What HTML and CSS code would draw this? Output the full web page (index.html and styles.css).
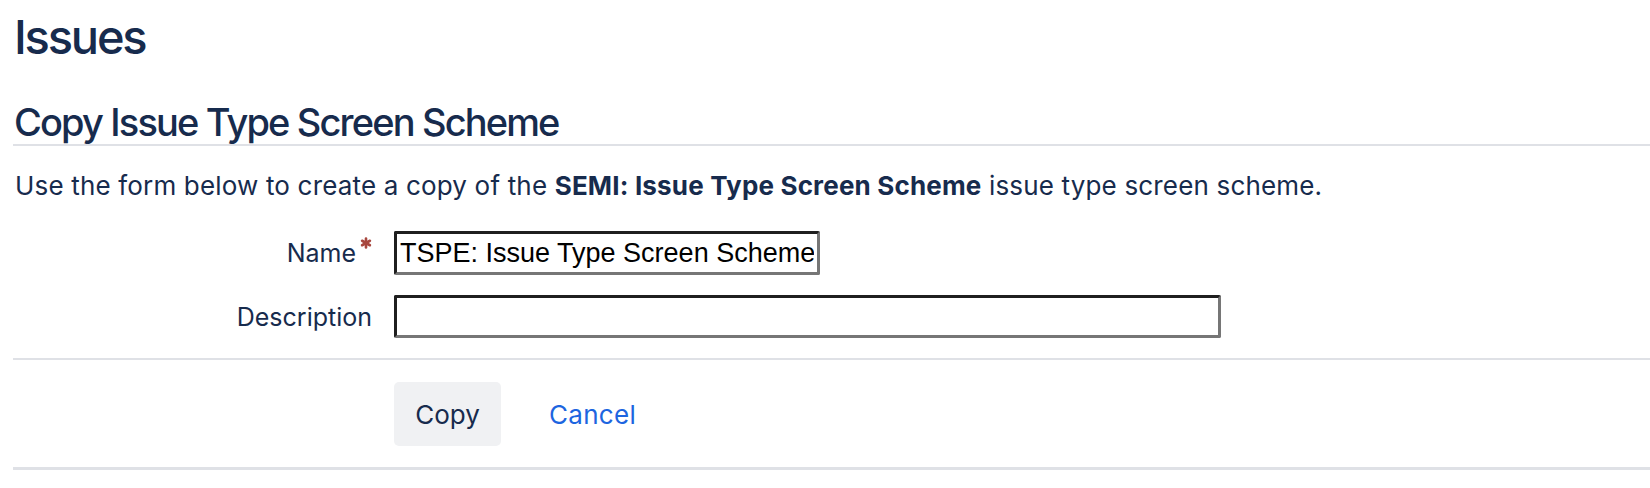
FILE: index.html
```html
<!DOCTYPE html>
<html lang="en">
<head>
<meta charset="utf-8">
<title>Copy Issue Type Screen Scheme</title>
<link rel="stylesheet" href="styles.css">
</head>
<body>
<div class="page">
  <h1 class="page-title">Issues</h1>
  <h2 class="section-title">Copy Issue Type Screen Scheme</h2>
  <p class="intro">Use the form below to create a copy of the <strong>SEMI: Issue Type Screen Scheme</strong> issue type screen scheme.</p>
  <form class="copy-form">
    <div class="fields">
      <div class="field">
        <label class="field-label" for="name">Name<svg class="req" viewBox="0 0 12 12" width="12" height="12" aria-hidden="true"><g stroke="currentColor" stroke-width="2.6" stroke-linecap="round"><line x1="6" y1="1.5" x2="6" y2="10.5"/><line x1="2.1" y1="3.75" x2="9.9" y2="8.25"/><line x1="2.1" y1="8.25" x2="9.9" y2="3.75"/></g></svg></label>
        <input class="text-input name-input" id="name" type="text" value="TSPE: Issue Type Screen Scheme">
      </div>
      <div class="field">
        <label class="field-label" for="desc">Description</label>
        <input class="text-input desc-input" id="desc" type="text" value="">
      </div>
    </div>
    <div class="buttons">
      <button class="btn" type="button">Copy</button>
      <a class="cancel" href="#">Cancel</a>
    </div>
  </form>
</div>
</body>
</html>
```

FILE: styles.css
```css
html, body {
  margin: 0;
  padding: 0;
  background: #ffffff;
}

body {
  font-family: Inter, "Noto Sans", sans-serif;
  color: #172b4d;
}

.page {
  padding-left: 13px;
}

.page-title {
  margin: 9px 0 0;
  padding-left: 1px;
  font-size: 47px;
  line-height: 56px;
  font-weight: 500;
  letter-spacing: -2.2px;
}

.section-title {
  margin: 35px 0 0;
  padding-left: 1px;
  font-size: 38px;
  line-height: 44px;
  font-weight: 500;
  letter-spacing: -1.85px;
  border-bottom: 2px solid #dfe1e6;
}

.intro {
  margin: 24px 0 0;
  padding-left: 2px;
  font-size: 26px;
  line-height: 32px;
  letter-spacing: 0.17px;
}

.intro strong {
  font-weight: 700;
}

.copy-form {
  margin: 0;
}

.fields {
  display: flex;
  flex-direction: column;
  gap: 20px;
  padding: 29px 0 20px;
  border-bottom: 2px solid #dfe1e6;
}

.field {
  display: flex;
  align-items: center;
  gap: 22px;
}

.field-label {
  width: 359px;
  text-align: right;
  font-size: 25px;
  line-height: 30px;
  display: flex;
  justify-content: flex-end;
  align-items: flex-start;
}

.req {
  color: #a8483f;
  margin-left: 4px;
  margin-top: -1px;
}

.text-input {
  box-sizing: border-box;
  margin: 0;
  padding: 0 3px;
  font-family: "Liberation Sans", Arial, sans-serif;
  font-size: 27px;
  color: #000;
  background: #fff;
  border: 3px solid;
  border-color: #1f1f1f #767676 #767676 #1f1f1f;
  border-radius: 2px;
  outline: none;
}

.name-input {
  width: 426px;
  height: 44px;
}

.desc-input {
  width: 827px;
  height: 43px;
}

.buttons {
  display: flex;
  align-items: center;
  padding: 22px 0 21px 381px;
  border-bottom: 3px solid #dfe1e6;
}

.btn {
  height: 64px;
  width: 107px;
  padding: 0;
  border: none;
  border-radius: 5px;
  background: #f0f1f3;
  color: #172b4d;
  font-family: Inter, "Noto Sans", sans-serif;
  font-size: 26px;
}

.cancel {
  margin-left: 48px;
  color: #1d65e0;
  text-decoration: none;
  font-size: 26px;
  letter-spacing: 0.3px;
}
```
